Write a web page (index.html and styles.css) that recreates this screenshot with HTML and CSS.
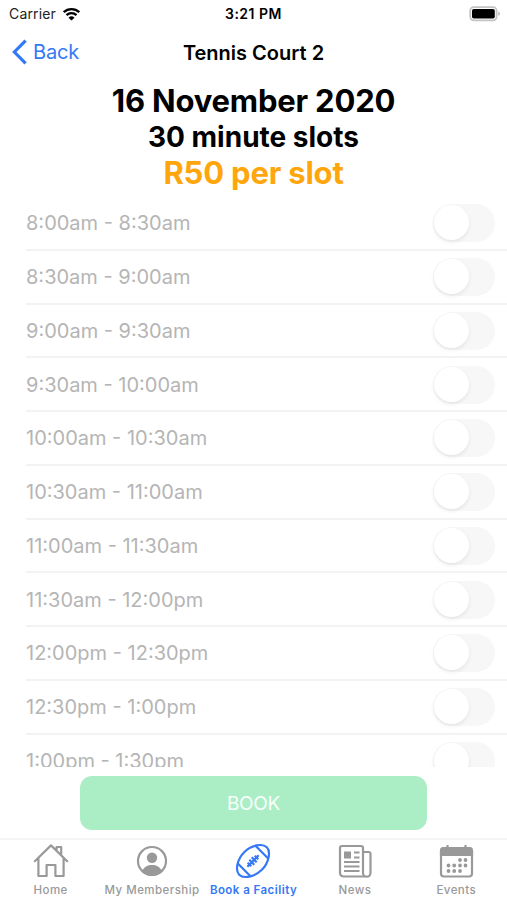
FILE: index.html
```html
<!DOCTYPE html>
<html lang="en">
<head>
    <meta charset="UTF-8">
    <meta name="viewport" content="width=device-width, initial-scale=1.0">
    <title>Tennis Court 2</title>
    <link rel="stylesheet" href="styles.css">
</head>
<body>

    <div class="status-bar">
        <div class="carrier">
            <span>Carrier</span>
            <svg class="wifi" viewBox="0 0 18 14">
                <path d="M1.2 5.2a11.2 11.2 0 0 1 15.6 0M4 8.2a7.2 7.2 0 0 1 10 0" fill="none" stroke="#000" stroke-width="2.3"/>
                <path d="M9 13.6 6 10.7a4.3 4.3 0 0 1 6 0z"/>
            </svg>
        </div>
        <span class="time">3:21 PM</span>
        <svg class="battery" viewBox="0 0 32 16">
            <rect x="1.2" y="1.2" width="26.4" height="13.2" rx="3.6" fill="#fff" stroke="#c4c4c4" stroke-width="1.8"/>
            <rect x="3" y="3" width="22.8" height="9.6" rx="1.8"/>
            <path d="M29.3 5.6c2.2.8 2.2 3.6 0 4.4z" fill="#b9b9b9"/>
        </svg>
    </div>

    <header class="nav-bar">
        <a class="back" href="#">
            <svg class="chevron" viewBox="0 0 16 26"><path d="M13.6 1.6 2.4 13l11.2 11.4" fill="none" stroke="currentColor" stroke-width="3.2"/></svg>
            <span>Back</span>
        </a>
        <h1>Tennis Court 2</h1>
    </header>

    <section class="summary">
        <h2 class="date">16 November 2020</h2>
        <h3 class="duration">30 minute slots</h3>
        <h2 class="price">R50 per slot</h2>
    </section>

    <main class="slots">
        <label class="slot"><span>8:00am - 8:30am</span><i class="switch"></i></label>
        <label class="slot"><span>8:30am - 9:00am</span><i class="switch"></i></label>
        <label class="slot"><span>9:00am - 9:30am</span><i class="switch"></i></label>
        <label class="slot"><span>9:30am - 10:00am</span><i class="switch"></i></label>
        <label class="slot"><span>10:00am - 10:30am</span><i class="switch"></i></label>
        <label class="slot"><span>10:30am - 11:00am</span><i class="switch"></i></label>
        <label class="slot"><span>11:00am - 11:30am</span><i class="switch"></i></label>
        <label class="slot"><span>11:30am - 12:00pm</span><i class="switch"></i></label>
        <label class="slot"><span>12:00pm - 12:30pm</span><i class="switch"></i></label>
        <label class="slot"><span>12:30pm - 1:00pm</span><i class="switch"></i></label>
        <label class="slot"><span>1:00pm - 1:30pm</span><i class="switch"></i></label>
    </main>

    <div class="actions">
        <button class="book" disabled>BOOK</button>
    </div>

    <nav class="tabs">
        <a class="tab" href="#">
            <svg viewBox="0 0 36 36" fill="none" stroke="currentColor" stroke-width="2.2" stroke-linejoin="round" stroke-linecap="round">
                <path d="M1.8 18.2 18 2.4l16.2 15.8M23.6 7.8V4h4.6v8.3M5.4 15v18h8.2V22h8.8v11h8.2V15"/>
            </svg>
            <span>Home</span>
        </a>
        <a class="tab" href="#">
            <svg viewBox="0 0 36 36">
                <circle cx="18" cy="18" r="14" fill="none" stroke="currentColor" stroke-width="2.2"/>
                <circle cx="18" cy="14.7" r="5.2" fill="currentColor"/>
                <path d="M8.5 27.7C10 23.8 13.4 22 18 22s8 1.8 9.5 5.7a13.5 13.5 0 0 1-19 0z" fill="currentColor"/>
            </svg>
            <span>My Membership</span>
        </a>
        <a class="tab active" href="#">
            <svg viewBox="0 0 36 36" fill="none" stroke="currentColor" stroke-width="2.2">
                <g transform="rotate(-45 18 18)">
                    <path d="M-1.5 18C-1.5 12 8 5.5 18 5.5S37.5 12 37.5 18 28 30.5 18 30.5-1.5 24-1.5 18z"/>
                    <path d="M5.5 9v18M30.5 9v18M10 18h16M13 15.5v5M16.3 14.5v7M19.7 14.5v7M23 15.5v5"/>
                </g>
            </svg>
            <span>Book a Facility</span>
        </a>
        <a class="tab" href="#">
            <svg viewBox="0 0 36 36" fill="none" stroke="currentColor" stroke-width="2.2">
                <path d="M26 9h5.5q2 0 2 2v19a3.5 3.5 0 0 1-7.5 0V5q0-2-2-2H5Q3 3 3 5v24.5q0 4 4 4h23"/>
                <path d="M17 9.5h5.5M17 14.5h5.5M7 19h15.5M7 23.5h15.5M7 28h15.5"/>
                <rect x="7" y="8.5" width="7" height="7" fill="currentColor" stroke="none"/>
            </svg>
            <span>News</span>
        </a>
        <a class="tab" href="#">
            <svg viewBox="0 0 36 36" fill="none" stroke="currentColor" stroke-width="2.2">
                <rect x="3" y="5" width="31" height="28.5" rx="3"/>
                <path d="M3 12V8q0-3 3-3h25q3 0 3 3v4z" fill="currentColor"/>
                <path d="M9.5 2v5M27.5 2v5"/>
                <path d="M22 17h.01M27.5 17h.01M10.500 22.500h.01M16.2 22.500h.01M22 22.500h.01M27.5 22.500h.01M10.500 28h.01M16.2 28h.01M22 28h.01" stroke-width="3.8" stroke-linecap="round"/>
            </svg>
            <span>Events</span>
        </a>
    </nav>

</body>
</html>
```
FILE: styles.css
```css
* {
    box-sizing: border-box;
}

body {
    margin: 0;
    height: 900px;
    display: flex;
    flex-direction: column;
    overflow: hidden;
    background: #fff;
    color: #000;
    font-family: Inter, sans-serif;
}

a {
    color: inherit;
    text-decoration: none;
}

h1, h2, h3 {
    margin: 0;
    text-align: center;
    white-space: nowrap;
}

/* Status bar */
.status-bar {
    height: 27px;
    padding: 0 6px 0 9px;
    display: grid;
    grid-template-columns: 1fr auto 1fr;
    align-items: center;
    font-size: 14px;
}

.carrier {
    display: flex;
    align-items: center;
    gap: 6px;
    color: #222;
    letter-spacing: 0.15px;
}

.wifi {
    width: 19px;
    height: 14px;
}

.time {
    margin-right: 3px;
    font-size: 14px;
    font-weight: 600;
    letter-spacing: 0.5px;
}

.battery {
    width: 32px;
    height: 16px;
    justify-self: end;
}

/* Navigation */
.nav-bar {
    height: 50px;
    padding: 0 12px;
    display: grid;
    grid-template-columns: 1fr auto 1fr;
    align-items: center;
}

.back {
    display: flex;
    align-items: center;
    gap: 5px;
    color: #3478f6;
    font-size: 20px;
    letter-spacing: -0.2px;
}

.chevron {
    width: 16px;
    height: 26px;
}

.nav-bar h1 {
    padding-top: 1px;
    font-size: 20px;
    font-weight: 600;
}

/* Date and price */
.summary {
    height: 120px;
    padding-top: 6px;
}

.date, .price {
    font-size: 31px;
    line-height: 36px;
    font-weight: 700;
    letter-spacing: -0.2px;
}

.duration {
    padding-top: 1px;
    font-size: 28px;
    line-height: 35px;
    font-weight: 700;
}

.price {
    color: #ffa60d;
}

/* Slots */
.slots {
    height: 570px;
    overflow: hidden;
}

.slot {
    height: 53.75px;
    margin-left: 26px;
    padding: 1px 12px 0 0;
    display: flex;
    align-items: center;
    justify-content: space-between;
    border-bottom: 2px solid #f3f3f3;
    color: #b5b5b5;
    font-size: 20px;
}

.switch {
    width: 62px;
    height: 38px;
    padding: 1px;
    border-radius: 19px;
    background: #f7f7f7;
}

.switch::before {
    content: "";
    display: block;
    width: 35px;
    height: 35px;
    border-radius: 50%;
    background: #fff;
    box-shadow: 0 2px 4px rgba(0, 0, 0, 0.08);
}

/* Book button */
.actions {
    height: 71px;
    padding-top: 9px;
    display: flex;
    justify-content: center;
    align-items: flex-start;
}

.book {
    width: 347px;
    height: 54px;
    padding: 0;
    border: none;
    border-radius: 12px;
    background: #abeec6;
    color: #f7fffa;
    font-family: inherit;
    font-size: 19px;
    letter-spacing: -0.3px;
}

/* Tabs */
.tabs {
    height: 62px;
    padding-top: 3px;
    border-top: 2px solid #f5f5f5;
    display: grid;
    grid-template-columns: repeat(5, 1fr);
    color: #999;
}

.tab {
    display: flex;
    flex-direction: column;
    align-items: center;
    font-size: 11.5px;
    font-weight: 500;
    line-height: 14px;
    letter-spacing: 0.45px;
    white-space: nowrap;
}

.tab svg {
    width: 36px;
    height: 36px;
    margin-bottom: 4px;
    overflow: visible;
}

.tab.active {
    color: #3478f6;
    font-weight: 600;
}
```
